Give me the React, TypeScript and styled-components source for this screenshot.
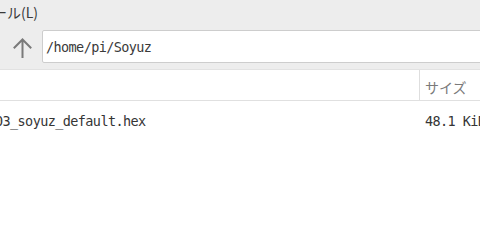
import React from "react";
import styled, { createGlobalStyle } from "styled-components";

const Global = createGlobalStyle`
  html, body { margin: 0; padding: 0; background: #ffffff; overflow: hidden; }
  body { width: 480px; height: 252px; }
  #root { width: 480px; height: 252px; overflow: hidden; }
`;

const Window = styled.div`
  width: 480px;
  height: 252px;
  display: flex;
  flex-direction: column;
  background: #ffffff;
  overflow: hidden;
`;

const TopArea = styled.div`
  background: #ededed;
  display: flex;
  flex-direction: column;
`;

const MenuBar = styled.div`
  height: 26px;
  display: flex;
  align-items: center;
  padding-bottom: 3px;
  box-sizing: border-box;
`;

const MenuItem = styled.span`
  font-family: "Noto Sans CJK JP", "DejaVu Sans", sans-serif;
  font-size: 14px;
  color: #3a3a3a;
  margin-left: -7px;
  white-space: nowrap;
`;

const Toolbar = styled.div`
  display: flex;
  align-items: center;
  gap: 4px;
  padding: 4px 0 6px 8px;
`;

const IconButton = styled.button`
  width: 30px;
  height: 33px;
  padding: 0;
  border: none;
  background: transparent;
  display: flex;
  align-items: center;
  justify-content: center;
`;

const AddressInput = styled.div`
  flex: 1;
  height: 33px;
  box-sizing: border-box;
  margin-right: -20px;
  background: #ffffff;
  border: 1px solid #cdcdcd;
  border-radius: 2px;
  display: flex;
  align-items: center;
  padding-left: 3px;
  font-family: "DejaVu Sans Mono", monospace;
  font-size: 13.5px;
  letter-spacing: -0.6px;
  color: #3a3a3a;
  white-space: nowrap;
`;

const Header = styled.div`
  display: grid;
  grid-template-columns: 420px 1fr;
  height: 32px;
  border-top: 1px solid #e2e2e2;
  border-bottom: 1px solid #e0e0e0;
  box-sizing: border-box;
`;

const HeaderCell = styled.div<{ $divider?: boolean }>`
  display: flex;
  align-items: center;
  padding-left: 5px;
  padding-top: 3px;
  border-right: ${(p) => (p.$divider ? "1px solid #dedede" : "none")};
  font-family: "Noto Sans CJK JP", "DejaVu Sans", sans-serif;
  font-size: 14px;
  color: #7a7a7a;
  white-space: nowrap;
`;

const FileRow = styled.div`
  display: grid;
  grid-template-columns: 420px 1fr;
  height: 22px;
  margin-top: 9px;
  align-items: center;
  font-family: "DejaVu Sans Mono", monospace;
  font-size: 13.5px;
  letter-spacing: -0.6px;
  color: #353535;
  white-space: nowrap;
`;

const NameCell = styled.div`
  margin-left: -5px;
  overflow: visible;
`;

const SizeCell = styled.div`
  padding-left: 5px;
`;

const UpArrow = () => (
  <svg width="22" height="22" viewBox="0 0 22 22" fill="none">
    <path
      d="M10.5 3.5 V22 M1.8 12.2 L10.5 3.5 L19.2 12.2"
      stroke="#7a7a7a"
      strokeWidth="2"
      strokeLinecap="butt"
      strokeLinejoin="miter"
    />
  </svg>
);

export default function App() {
  return (
    <Window>
      <Global />
      <TopArea>
        <MenuBar>
          <MenuItem>ール(L)</MenuItem>
        </MenuBar>
        <Toolbar>
          <IconButton aria-label="up">
            <UpArrow />
          </IconButton>
          <AddressInput>/home/pi/Soyuz</AddressInput>
        </Toolbar>
      </TopArea>
      <Header>
        <HeaderCell $divider />
        <HeaderCell>サイズ</HeaderCell>
      </Header>
      <FileRow>
        <NameCell>03_soyuz_default.hex</NameCell>
        <SizeCell>48.1 KiB</SizeCell>
      </FileRow>
    </Window>
  );
}
